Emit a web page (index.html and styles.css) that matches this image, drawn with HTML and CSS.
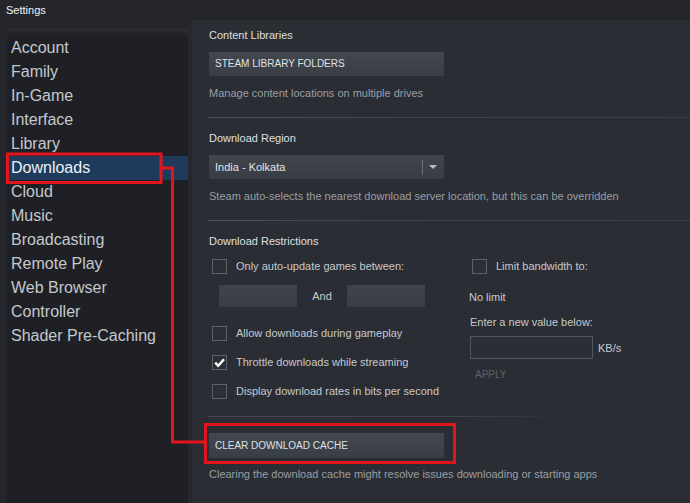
FILE: index.html
```html
<!DOCTYPE html>
<html>
<head>
    <meta charset="utf-8" />
    <link rel="stylesheet" href="styles.css">
</head>
<body>
    <div class="titlebar">Settings</div>
    <div class="main">
        <ul class="sidebar">
            <li>Account</li>
            <li>Family</li>
            <li>In-Game</li>
            <li>Interface</li>
            <li>Library</li>
            <li class="selected">Downloads</li>
            <li>Cloud</li>
            <li>Music</li>
            <li>Broadcasting</li>
            <li>Remote Play</li>
            <li>Web Browser</li>
            <li>Controller</li>
            <li>Shader Pre-Caching</li>
        </ul>

        <div class="content">
            <div class="heading">Content Libraries</div>
            <div class="button">STEAM LIBRARY FOLDERS</div>
            <div class="caption">Manage content locations on multiple drives</div>
            <div class="separator"></div>

            <div class="heading">Download Region</div>
            <div class="dropdown">
                <span class="dropdown_text">India - Kolkata</span>
                <span class="dropdown_divider"></span>
                <span class="dropdown_arrow"></span>
            </div>
            <div class="caption">Steam auto-selects the nearest download server location, but this can be overridden</div>
            <div class="separator"></div>

            <div class="heading">Download Restrictions</div>
            <div class="restrictions">
                <div class="col_left">
                    <div class="check_row first_row">
                        <span class="checkbox"></span>Only auto-update games between:
                    </div>
                    <div class="time_row">
                        <span class="time_input"></span>
                        <span class="and">And</span>
                        <span class="time_input"></span>
                    </div>
                    <div class="check_row allow_row">
                        <span class="checkbox"></span>Allow downloads during gameplay
                    </div>
                    <div class="check_row">
                        <span class="checkbox checked">
                            <svg width="15" height="15" viewBox="0 0 15 15"><path d="M3.2 7.6 L6.2 10.8 L12 4.2" fill="none" stroke="#ffffff" stroke-width="2.4" /></svg>
                        </span>Throttle downloads while streaming
                    </div>
                    <div class="check_row">
                        <span class="checkbox"></span>Display download rates in bits per second
                    </div>
                </div>
                <div class="col_right">
                    <div class="check_row first_row">
                        <span class="checkbox"></span>Limit bandwidth to:
                    </div>
                    <div class="plain no_limit">No limit</div>
                    <div class="plain new_value">Enter a new value below:</div>
                    <div class="rate_row">
                        <span class="rate_input"></span>
                        <span class="plain">KB/s</span>
                    </div>
                    <div class="apply">APPLY</div>
                </div>
            </div>
            <div class="separator bottom_sep"></div>

            <div class="button clear_button">CLEAR DOWNLOAD CACHE</div>
            <div class="caption">Clearing the download cache might resolve issues downloading or starting apps</div>
        </div>
    </div>

    <!-- red annotation drawn over the screenshot -->
    <svg class="annotation" width="690" height="503" viewBox="0 0 690 503">
        <rect x="7.5" y="154" width="153.5" height="28.5" fill="none" stroke="#e3141c" stroke-width="3" />
        <polyline points="161,168 172.5,168 172.5,442 205,442" fill="none" stroke="#e3141c" stroke-width="3" />
        <rect x="205.5" y="424.5" width="249" height="38" fill="none" stroke="#e3141c" stroke-width="3" />
    </svg>
</body>
</html>
```

FILE: styles.css
```css
body {
    margin: 0;
    width: 690px;
    height: 503px;
    overflow: hidden;
    background: #24262b;
    font-family: "Liberation Sans", Arial, sans-serif;
    position: relative;
}

.titlebar {
    height: 20px;
    line-height: 20px;
    padding-left: 6px;
    font-size: 11px;
    color: #f2f2f2;
}

.main {
    display: flex;
    height: 483px;
}

.sidebar {
    list-style: none;
    margin: 8px 0 0 7px;
    padding: 8px 0 0 0;
    width: 181px;
    background: linear-gradient(to bottom, #2c2e34 0px, #1e2025 9px, #1e2025 100%);
}

.sidebar li {
    height: 24px;
    line-height: 24px;
    padding-left: 4px;
    font-size: 16px;
    color: #c5c8cc;
}

.sidebar li.selected {
    background: #1f3b5c;
    color: #eef1f4;
}

.content {
    flex: 1;
    background: #2a2d33;
    padding: 8px 0 0 17px;
    border-left: 4px solid #26282d;
}

.heading {
    font-size: 11px;
    line-height: 14px;
    height: 14px;
    color: #dde0e3;
}

.caption {
    margin-top: 10px;
    font-size: 11px;
    line-height: 14px;
    color: #9a9ea4;
}

.button {
    margin-top: 10px;
    width: 229px;
    height: 24px;
    line-height: 24px;
    padding-left: 6px;
    font-size: 10px;
    color: #dfe2e5;
    background: linear-gradient(to bottom, #43474f, #393d44);
}

.separator {
    margin: 17px 0 13px -1px;
    height: 1px;
    background: linear-gradient(to right, #4a4f57, #3d4148 60%, #3a3e45);
}

.dropdown {
    margin-top: 10px;
    width: 235px;
    height: 24px;
    display: flex;
    align-items: center;
    background: linear-gradient(to bottom, #41454d, #383c43);
}

.dropdown_text {
    flex: 1;
    padding-left: 6px;
    font-size: 11px;
    color: #e3e5e8;
}

.dropdown_divider {
    width: 1px;
    height: 15px;
    background: #6d7178;
}

.dropdown_arrow {
    margin: 0 7px 0 6px;
    width: 0;
    height: 0;
    border-left: 4px solid transparent;
    border-right: 4px solid transparent;
    border-top: 4px solid #b9bcc0;
}

.restrictions {
    display: flex;
}

.col_left {
    width: 260px;
}

.col_right {
    flex: 1;
}

.check_row {
    display: flex;
    align-items: center;
    height: 16px;
    margin-top: 13px;
    padding-left: 3px;
    font-size: 11px;
    color: #c6c9cd;
}

.first_row {
    margin-top: 10px;
}

.allow_row {
    margin-top: 18px;
}

.checkbox {
    width: 13px;
    height: 13px;
    margin-right: 9px;
    border: 1px solid #5d6168;
    background: #2c2f35;
    position: relative;
}

.checkbox svg {
    position: absolute;
    left: -1px;
    top: -1px;
}

.time_row {
    display: flex;
    align-items: center;
    margin-top: 11px;
    padding-left: 10px;
}

.time_input {
    width: 78px;
    height: 22px;
    background: linear-gradient(to bottom, #3f434a, #383c43);
}

.and {
    width: 50px;
    text-align: center;
    font-size: 11px;
    color: #c6c9cd;
}

.plain {
    font-size: 11px;
    line-height: 14px;
    color: #c6c9cd;
}

.no_limit {
    margin-top: 16px;
}

.new_value {
    margin-top: 11px;
    padding-left: 1px;
}

.rate_row {
    display: flex;
    align-items: center;
    margin-top: 7px;
    padding-left: 1px;
}

.rate_input {
    width: 121px;
    height: 21px;
    margin-right: 5px;
    border: 1px solid #545860;
    background: #2b2e34;
}

.apply {
    margin-top: 9px;
    padding-left: 6px;
    font-size: 10px;
    line-height: 14px;
    color: #5f636a;
}

.bottom_sep {
    margin: 17px 0 0 -1px;
    width: 360px;
    background: linear-gradient(to right, #434a56, #3c4350 70%, #2a2d33);
}

.clear_button {
    margin-top: 16px;
    height: 25px;
    line-height: 25px;
}

.clear_button + .caption {
    margin-top: 9px;
}

.annotation {
    position: absolute;
    left: 0;
    top: 0;
    pointer-events: none;
}
```
